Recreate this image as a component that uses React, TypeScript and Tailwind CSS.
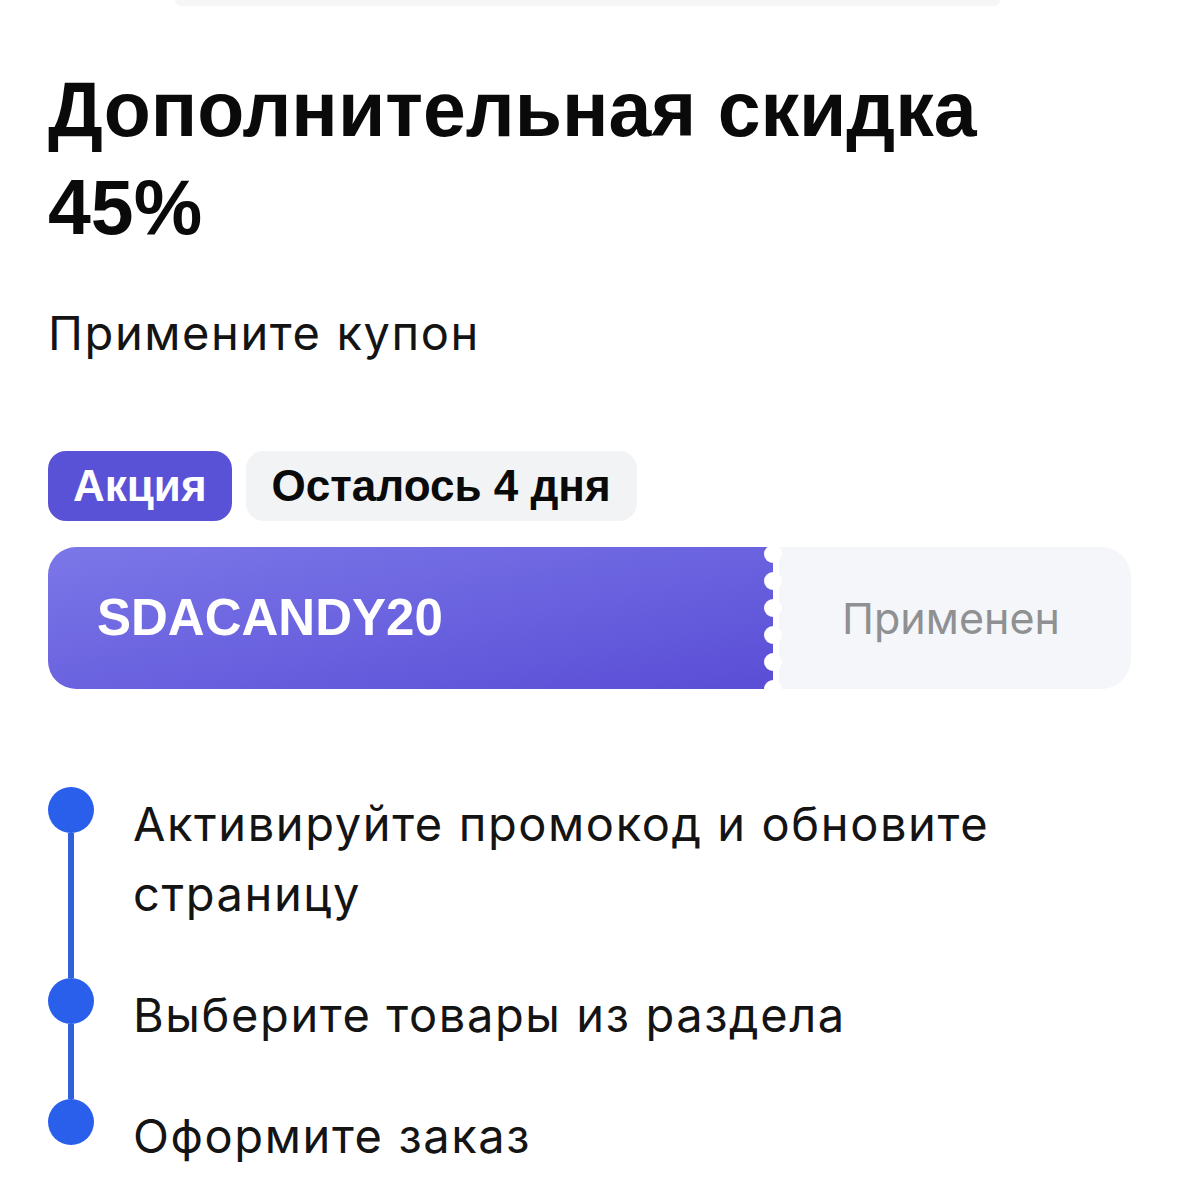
import React from 'react';

const steps = [
  { text: 'Активируйте промокод и обновите страницу' },
  { text: 'Выберите товары из раздела' },
  { text: 'Оформите заказ' }
];

const scallops = [0, 1, 2, 3, 4, 5];

export default function App() {
  return (
    <div className="w-[1179px] min-h-[1204px] bg-white overflow-hidden">
      {/* bottom edge of the card above */}
      <div className="ml-[175px] w-[825px] h-[6px] bg-[#f6f6f6] rounded-b-[14px]" />

      <div className="px-[48px] pt-[54px]">
        <h1 className="font-['Liberation_Sans',Arial,sans-serif] font-bold text-[77px] leading-[98px] text-[#0a0a0a]">
          Дополнительная скидка
          <br />
          45%
        </h1>

        <p className="mt-[49px] font-['Inter',sans-serif] text-[47px] leading-[56px] tracking-[1.6px] text-[#141414]">
          Примените купон
        </p>

        {/* badges */}
        <div className="mt-[90px] flex gap-[14px]">
          <span className="h-[70px] px-[25px] flex items-center rounded-[18px] bg-[#5a52d6] text-white font-['Liberation_Sans',Arial,sans-serif] font-bold text-[44px]">
            Акция
          </span>
          <span className="h-[70px] px-[26px] flex items-center rounded-[18px] bg-[#f2f3f5] text-[#0a0a0a] font-['Liberation_Sans',Arial,sans-serif] font-bold text-[44px]">
            Осталось 4 дня
          </span>
        </div>

        {/* coupon */}
        <div className="mt-[26px] flex h-[142px] w-[1083px]">
          <div className="relative flex-1 flex items-center pl-[49px] rounded-l-[28px] bg-gradient-to-br from-[#7c77e8] to-[#5a4dd6]">
            <span className="font-['Liberation_Sans',Arial,sans-serif] font-bold text-[51px] text-white">
              SDACANDY20
            </span>
            <div className="absolute right-[-9px] top-[-2px] flex flex-col gap-[9px]">
              {scallops.map((i) => (
                <div key={i} className="w-[18px] h-[18px] rounded-full bg-white" />
              ))}
            </div>
          </div>
          <div className="w-[352px] ml-[6px] flex items-center justify-center rounded-r-[30px] bg-[#f4f6f9]">
            <span className="font-['Inter',sans-serif] text-[43px] text-[#8f9092] pr-[8px]">Применен</span>
          </div>
        </div>

        {/* steps */}
        <ul className="mt-[98px]">
          {steps.map((s, i) => (
            <li key={i} className="flex">
              <div className="w-[46px] flex flex-col items-center shrink-0">
                <div className="w-[46px] h-[46px] rounded-full bg-[#2a5fec]" />
                {i < steps.length - 1 && <div className="w-[6px] flex-1 bg-[#3060db]" />}
              </div>
              <p className="ml-[39px] mt-[2px] pb-[49px] w-[920px] font-['Inter',sans-serif] text-[47px] leading-[70px] tracking-[1.6px] text-[#141414]">
                {s.text}
              </p>
            </li>
          ))}
        </ul>
      </div>
    </div>
  );
}
